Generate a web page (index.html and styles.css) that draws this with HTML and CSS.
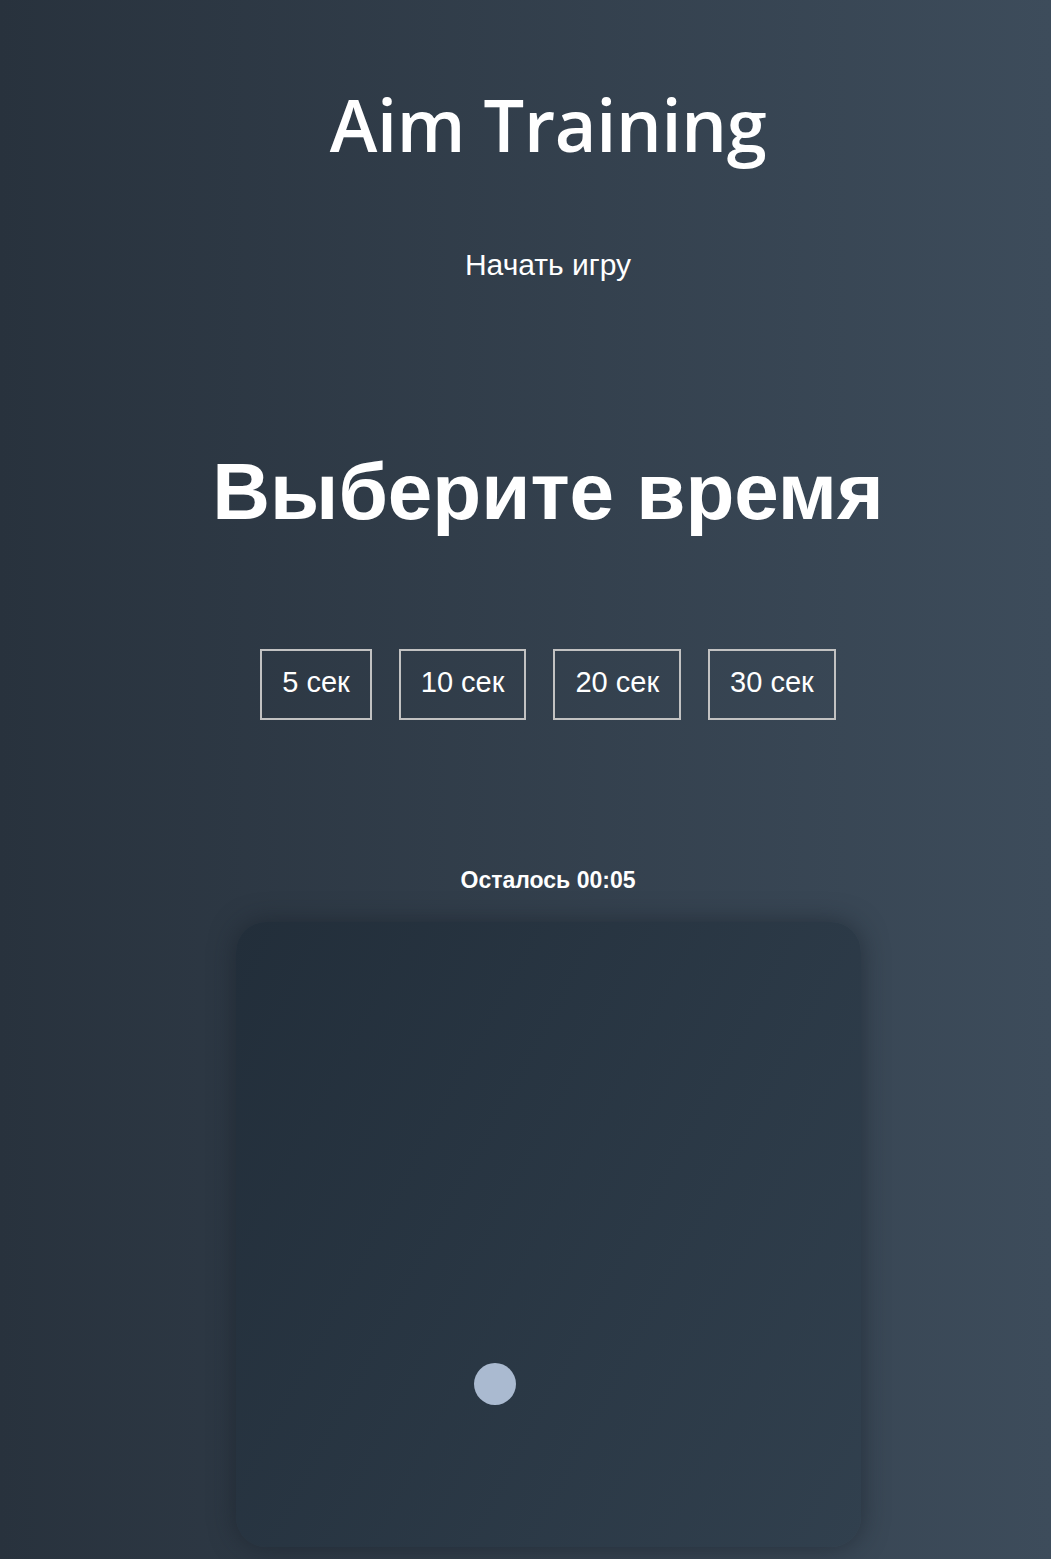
FILE: index.html
```html
<!DOCTYPE html>
<html lang="ru">
<head>
<meta charset="utf-8">
<title>Aim Training</title>
<link rel="stylesheet" href="styles.css">
</head>
<body>
<main class="page">
  <h1 class="title">Aim Training</h1>
  <a class="start" href="#">Начать игру</a>
  <h2 class="heading">Выберите время</h2>
  <ul class="time-list">
    <li><button class="time-btn">5 сек</button></li>
    <li><button class="time-btn">10 сек</button></li>
    <li><button class="time-btn">20 сек</button></li>
    <li><button class="time-btn">30 сек</button></li>
  </ul>
  <h3 class="timer">Осталось <span>00:05</span></h3>
  <div class="board">
    <div class="circle" style="left:238px; top:441px; width:42px; height:42px;"></div>
  </div>
</main>
</body>
</html>
```

FILE: styles.css
```css
html {
  background: linear-gradient(90deg, #28323d 0%, #3d4c5b 100%);
  min-height: 100%;
}
body {
  margin: 0;
  min-height: 1559px;
  color: #fff;
  font-family: "Liberation Sans", Arial, sans-serif;
}
.page {
  display: flex;
  flex-direction: column;
  align-items: center;
  padding-left: 45px;
  text-align: center;
}
.title {
  margin: 79px 0 0;
  font-family: "Open Sans", sans-serif;
  font-weight: 600;
  font-size: 72px;
  line-height: 90px;
  letter-spacing: -0.3px;
}
.start {
  margin-top: 79px;
  color: #fff;
  text-decoration: none;
  font-size: 30px;
  line-height: 34px;
}
.heading {
  margin: 166px 0 0;
  font-size: 80px;
  font-weight: 700;
  line-height: 88px;
}
.time-list {
  list-style: none;
  display: flex;
  gap: 27px;
  margin: 113px 0 0;
  padding: 0;
}
.time-btn {
  background: transparent;
  border: 2px solid #c2c2c2;
  color: #fff;
  font-family: "Liberation Sans", Arial, sans-serif;
  font-size: 29px;
  line-height: 33px;
  padding: 15px 20px 19px;
  cursor: pointer;
}
.timer {
  margin: 147px 0 0;
  font-size: 23px;
  line-height: 26px;
  font-weight: 700;
}
.board {
  position: relative;
  margin-top: 29px;
  width: 625px;
  height: 625px;
  border-radius: 30px;
  background: linear-gradient(118deg, #222e3a 0%, #31404e 100%);
  box-shadow: 0 0 26px rgba(22, 30, 38, 0.55);
}
.circle {
  position: absolute;
  border-radius: 50%;
  background: #aabad0;
}
```
